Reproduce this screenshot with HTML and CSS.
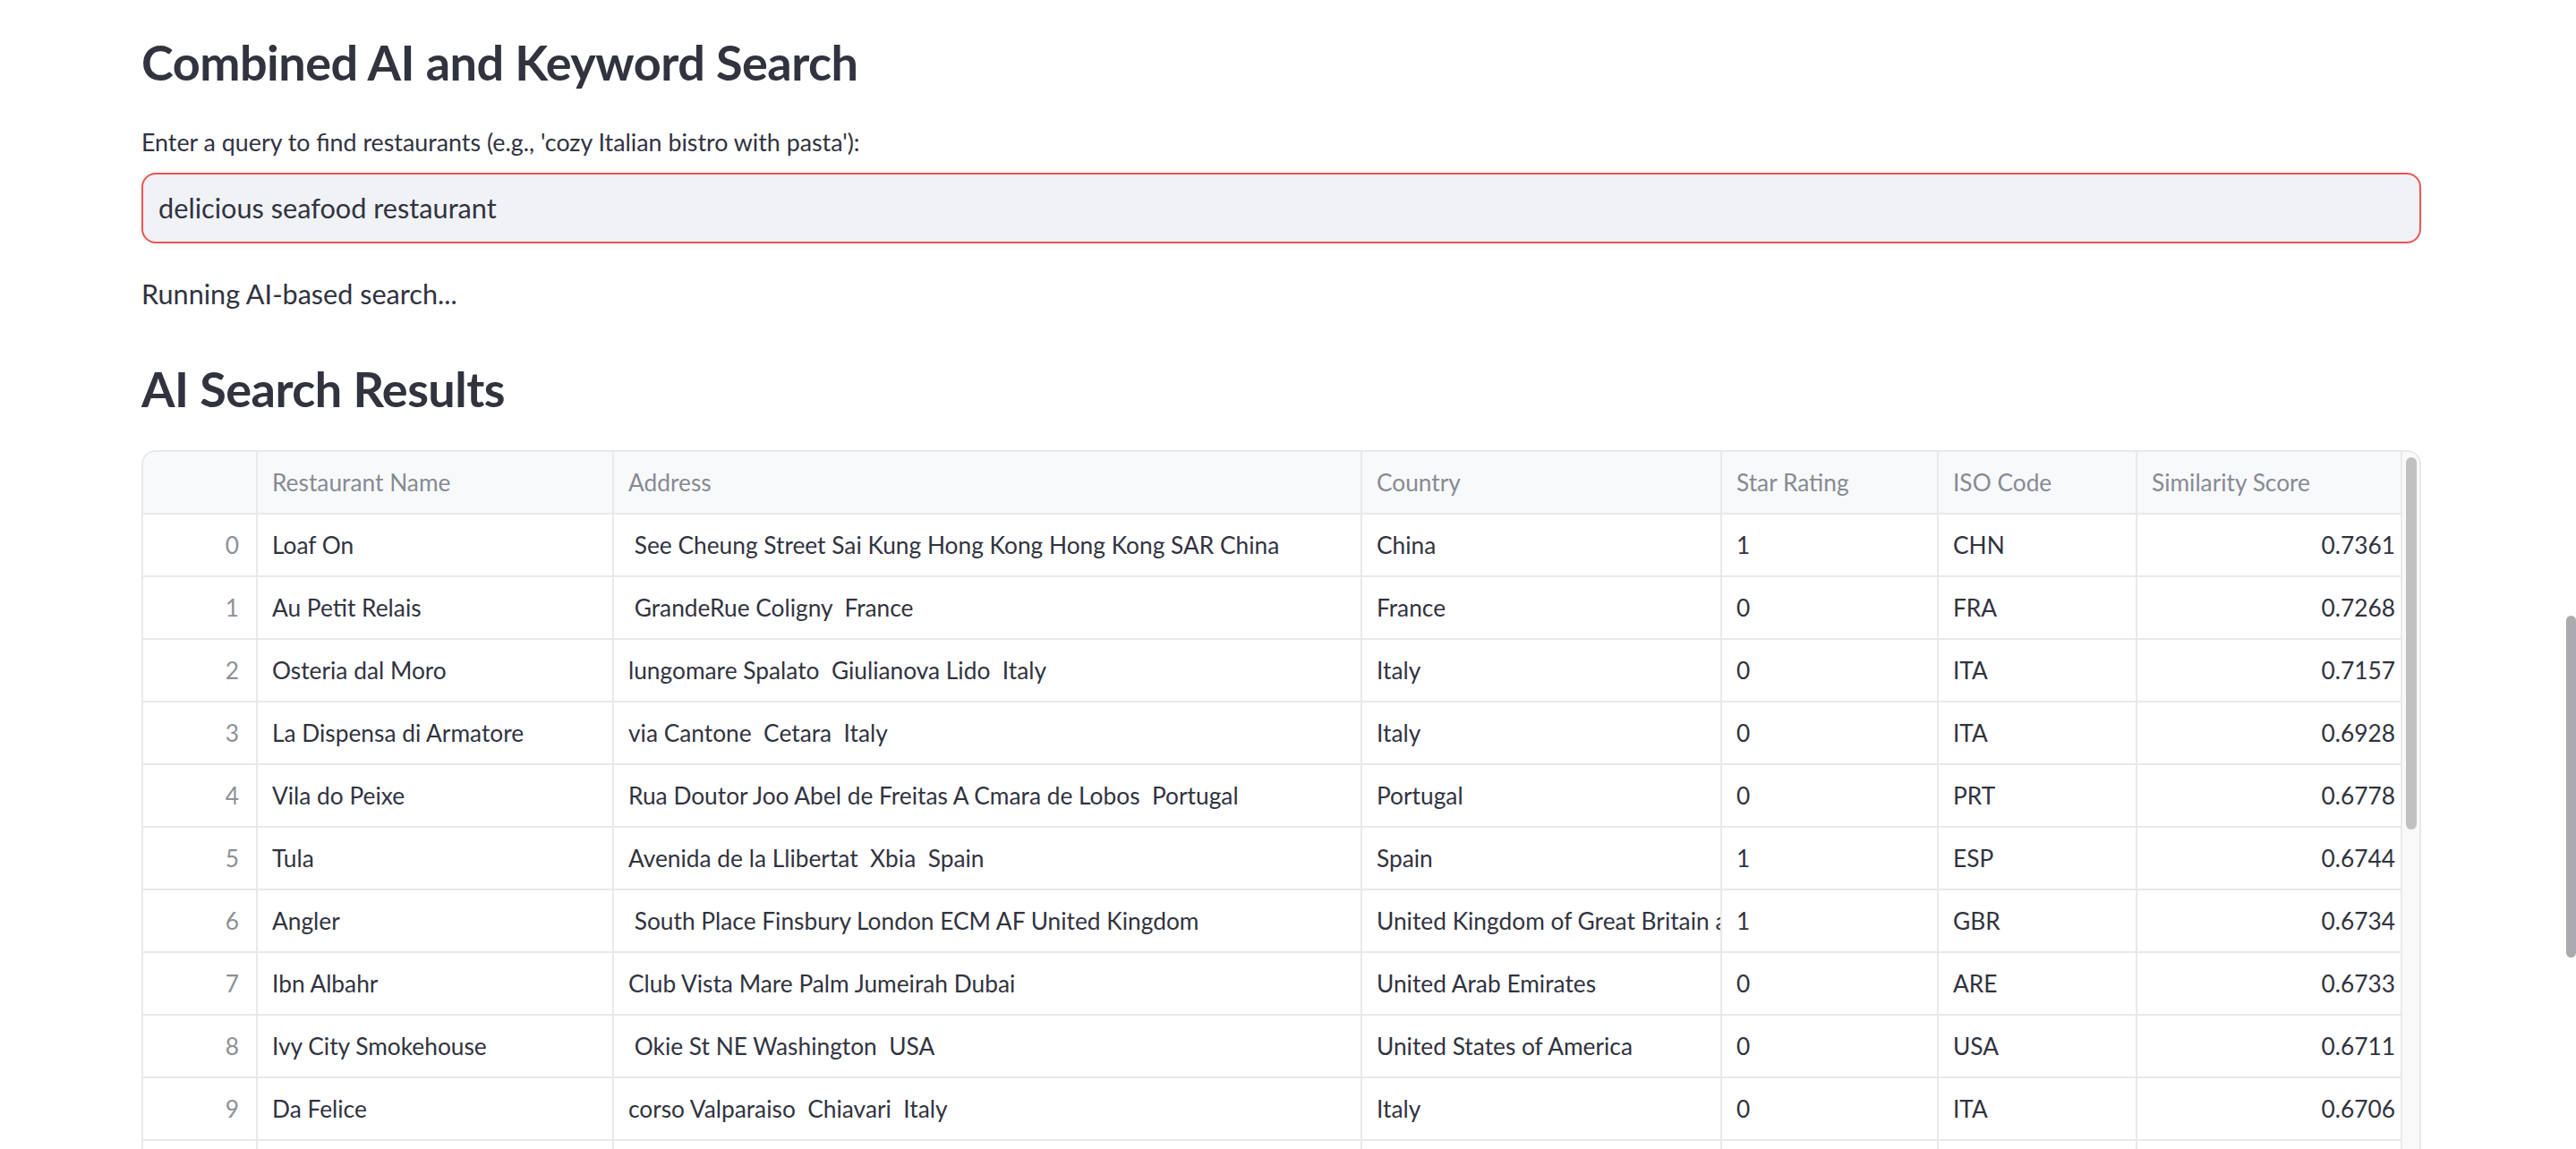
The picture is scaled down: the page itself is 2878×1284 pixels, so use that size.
FILE: index.html
```html
<!DOCTYPE html>
<html lang="en">
<head>
<meta charset="utf-8">
<title>Combined AI and Keyword Search</title>
<link rel="stylesheet" href="styles.css">
</head>
<body>
<main class="main">
  <h2 class="heading title">Combined AI and Keyword Search</h2>
  <label class="label" for="q">Enter a query to find restaurants (e.g., 'cozy Italian bistro with pasta'):</label>
  <div class="input"><input id="q" class="input-field" type="text" value="delicious seafood restaurant"></div>
  <p class="status">Running AI-based search...</p>
  <h2 class="heading results">AI Search Results</h2>

  <div class="table">
    <div class="grid">
      <div class="cell head"></div>
      <div class="cell head">Restaurant Name</div>
      <div class="cell head">Address</div>
      <div class="cell head">Country</div>
      <div class="cell head">Star Rating</div>
      <div class="cell head">ISO Code</div>
      <div class="cell head">Similarity Score</div>

      <div class="cell idx">0</div><div class="cell">Loaf On</div><div class="cell"> See Cheung Street Sai Kung Hong Kong Hong Kong SAR China</div><div class="cell">China</div><div class="cell">1</div><div class="cell">CHN</div><div class="cell num">0.7361</div>
      <div class="cell idx">1</div><div class="cell">Au Petit Relais</div><div class="cell"> GrandeRue Coligny  France</div><div class="cell">France</div><div class="cell">0</div><div class="cell">FRA</div><div class="cell num">0.7268</div>
      <div class="cell idx">2</div><div class="cell">Osteria dal Moro</div><div class="cell">lungomare Spalato  Giulianova Lido  Italy</div><div class="cell">Italy</div><div class="cell">0</div><div class="cell">ITA</div><div class="cell num">0.7157</div>
      <div class="cell idx">3</div><div class="cell">La Dispensa di Armatore</div><div class="cell">via Cantone  Cetara  Italy</div><div class="cell">Italy</div><div class="cell">0</div><div class="cell">ITA</div><div class="cell num">0.6928</div>
      <div class="cell idx">4</div><div class="cell">Vila do Peixe</div><div class="cell">Rua Doutor Joo Abel de Freitas A Cmara de Lobos  Portugal</div><div class="cell">Portugal</div><div class="cell">0</div><div class="cell">PRT</div><div class="cell num">0.6778</div>
      <div class="cell idx">5</div><div class="cell">Tula</div><div class="cell">Avenida de la Llibertat  Xbia  Spain</div><div class="cell">Spain</div><div class="cell">1</div><div class="cell">ESP</div><div class="cell num">0.6744</div>
      <div class="cell idx">6</div><div class="cell">Angler</div><div class="cell"> South Place Finsbury London ECM AF United Kingdom</div><div class="cell clip"><span class="clip-text">United Kingdom of Great Britain and Northern Ireland</span></div><div class="cell">1</div><div class="cell">GBR</div><div class="cell num">0.6734</div>
      <div class="cell idx">7</div><div class="cell">Ibn Albahr</div><div class="cell">Club Vista Mare Palm Jumeirah Dubai</div><div class="cell">United Arab Emirates</div><div class="cell">0</div><div class="cell">ARE</div><div class="cell num">0.6733</div>
      <div class="cell idx">8</div><div class="cell">Ivy City Smokehouse</div><div class="cell"> Okie St NE Washington  USA</div><div class="cell">United States of America</div><div class="cell">0</div><div class="cell">USA</div><div class="cell num">0.6711</div>
      <div class="cell idx">9</div><div class="cell">Da Felice</div><div class="cell">corso Valparaiso  Chiavari  Italy</div><div class="cell">Italy</div><div class="cell">0</div><div class="cell">ITA</div><div class="cell num">0.6706</div>
      <div class="cell idx"></div><div class="cell"></div><div class="cell"></div><div class="cell"></div><div class="cell"></div><div class="cell"></div><div class="cell num"></div>
    </div>
    <div class="vtrack"><div class="vthumb"></div></div>
  </div>
</main>
<div class="page-thumb"></div>
</body>
</html>
```

FILE: styles.css
```css
html, body {
  margin: 0;
  padding: 0;
  height: 1284px;
  overflow: hidden;
  background: #ffffff;
}

body {
  font-family: Lato, "Noto Sans", "Liberation Sans", sans-serif;
  color: #31333f;
  position: relative;
}

.main {
  padding: 0 173px 0 158px;
  display: flex;
  flex-direction: column;
}

.heading {
  font-size: 54px;
  font-weight: 700;
  line-height: 68px;
  margin: 0;
  color: #31333f;
  letter-spacing: -0.5px;
}

.title {
  margin-top: 36px;
}

.label {
  margin-top: 35px;
  font-size: 26.8px;
  line-height: 40px;
}

.input {
  margin-top: 14px;
  height: 79px;
  box-sizing: border-box;
  border: 2px solid #ee5353;
  border-radius: 16px;
  background: #f0f2f6;
  display: flex;
  align-items: center;
  padding: 0 17px;
}

.input-field {
  border: 0;
  outline: 0;
  background: transparent;
  font-family: inherit;
  font-size: 30.7px;
  color: #31333f;
  width: 100%;
  padding: 0;
}

.status {
  margin: 38px 0 0;
  font-size: 30.6px;
  line-height: 38px;
}

.results {
  margin-top: 53px;
}

.table {
  margin-top: 34px;
  display: flex;
  border: 2px solid #e8e9eb;
  border-radius: 16px;
  overflow: hidden;
  height: 880px;
}

.grid {
  display: grid;
  grid-template-columns: 128px 398px 836px 402px 242px 222px 296px;
  grid-auto-rows: 70px;
  flex: none;
}

.cell {
  box-sizing: border-box;
  border-right: 2px solid #e8e9eb;
  border-bottom: 2px solid #e8e9eb;
  display: flex;
  align-items: center;
  padding: 0 16px;
  font-size: 26.3px;
  white-space: pre;
  overflow: hidden;
  color: #31333f;
}

.clip {
  padding-right: 0;
}

.clip-text {
  display: block;
  overflow: hidden;
  max-width: 100%;
}

.head {
  background: #f8f9fb;
  color: #878a93;
}

.idx {
  justify-content: flex-end;
  color: #8e9098;
  padding-right: 19px;
}

.num {
  justify-content: flex-end;
  padding-right: 6px;
}

.vtrack {
  flex: 1;
  background: #f9f9f9;
  padding: 6px 0 0 4px;
}

.vthumb {
  width: 12px;
  height: 416px;
  border-radius: 6px;
  background: #c1c1c1;
}

.page-thumb {
  position: absolute;
  left: 2867px;
  top: 688px;
  width: 11px;
  height: 382px;
  border-radius: 6px;
  background: #aaaaaf;
}
```
